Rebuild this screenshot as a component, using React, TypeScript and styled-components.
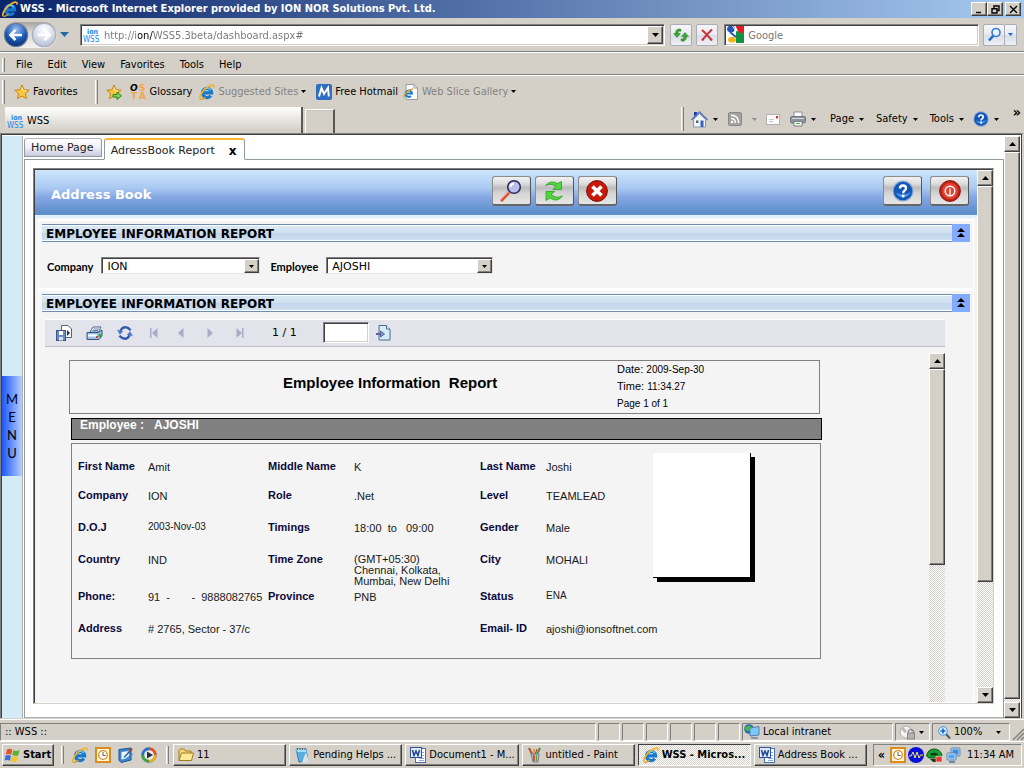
import React from "react";
import styled, { createGlobalStyle, css } from "styled-components";

const face = "#d4d0c8";
const ui = `"DejaVu Sans Condensed", "DejaVu Sans", sans-serif`;
const verdana = `"DejaVu Sans", sans-serif`;
const arial = `"Liberation Sans", sans-serif`;

const Global = createGlobalStyle`
  * { box-sizing: border-box; }
  body { margin: 0; background: ${face}; font: 11px/14px ${ui}; color: #000; }
  button, input, select { font: inherit; color: inherit; margin: 0; padding: 0; border: 0; border-radius: 0; background: none; outline: 0; }
  svg { display: block; flex: none; }
  h1, h2, dl, dd, dt, p { margin: 0; }
`;

const raised = css`
  background: ${face};
  border: 1px solid;
  border-color: #fff #404040 #404040 #fff;
  box-shadow: inset -1px -1px 0 #808080;
`;
const sunken = css`
  border: 1px solid;
  border-color: #808080 #fff #fff #808080;
`;
const checker = css`
  background: repeating-conic-gradient(#fff 0 25%, ${face} 0 50%) 0 0 / 2px 2px;
`;

const Screen = styled.div`
  min-height: 100vh;
  display: flex;
  flex-direction: column;
`;

/* Window chrome */
const TitleBar = styled.header`
  height: 18px;
  display: flex;
  align-items: center;
  gap: 2px;
  padding: 0 3px 0 2px;
  background: linear-gradient(90deg, #0a246a, #a6caf0);
`;
const Title = styled.h1`
  flex: 1;
  font: bold 11px/16px ${ui};
  color: #fff;
  white-space: nowrap;
`;
const WinButton = styled.button<{ $apart?: boolean }>`
  ${raised}
  width: 16px;
  height: 14px;
  margin-left: ${(p) => (p.$apart ? "0" : "-2px")};
  display: flex;
  align-items: center;
  justify-content: center;
`;
const Band = styled.div<{ $h: number }>`
  height: ${(p) => p.$h}px;
  display: flex;
  align-items: center;
  border-bottom: 1px solid #808080;
  box-shadow: 0 1px 0 #fff;
`;
const AddressBand = styled(Band)`
  padding: 0 7px 0 3px;
`;
const NavPill = styled.div`
  display: flex;
  gap: 2px;
  margin-right: 3px;
  border-radius: 13px;
  background: linear-gradient(#a8a49c, #dcdad6 40%, #f4f2f0);
`;
const PlainButton = styled.button`
  display: flex;
  align-items: center;
  white-space: nowrap;
`;
const Field = styled.div<{ $grow: number; $ml: number }>`
  flex: ${(p) => p.$grow} 1 0;
  margin-left: ${(p) => p.$ml}px;
  height: 22px;
  display: flex;
  align-items: center;
  gap: 4px;
  padding: 0 1px 0 2px;
  background: #fff;
  border: 1px solid;
  border-color: #808080 #fff #fff #808080;
  box-shadow: inset 1px 1px 0 #404040, inset -1px -1px 0 ${face};
`;
const UrlInput = styled.input`
  flex: 1;
  min-width: 0;
  padding-top: 2px;
  background: linear-gradient(90deg, #777 34px, #000 34px, #000 49px, #777 49px);
  -webkit-background-clip: text;
  -webkit-text-fill-color: transparent;
`;
const SearchInput = styled.input`
  flex: 1;
  min-width: 0;
  padding-top: 2px;
  color: #777;
`;
const ArrowBox = styled.button<{ $w: number; $h: number }>`
  ${raised}
  width: ${(p) => p.$w}px;
  height: ${(p) => p.$h}px;
  display: flex;
  align-items: center;
  justify-content: center;
  flex: none;
`;
const GlassButton = styled.button<{ $w: number; $ml: number }>`
  width: ${(p) => p.$w}px;
  height: 22px;
  margin-left: ${(p) => p.$ml}px;
  display: flex;
  align-items: center;
  justify-content: center;
  border: 1px solid #a9adb8;
  border-radius: 2px;
  background: linear-gradient(#f6f6f8, #e9ebf0 50%, #dadde6 51%, #eef0f5);
`;
const MenuBand = styled(Band)`
  gap: 11px;
  padding: 3px 0 0 2px;
`;
const MenuList = styled.nav`
  display: flex;
  gap: 15px;
`;
const Grip = styled.span<{ $h: number; $ml?: number }>`
  width: 3px;
  height: ${(p) => p.$h}px;
  margin-left: ${(p) => p.$ml ?? 0}px;
  border-left: 1px solid #fff;
  border-right: 1px solid #808080;
  flex: none;
`;
const MenuItem = styled.button`
  white-space: nowrap;
`;
const FavBand = styled.div`
  height: 31px;
  display: flex;
  align-items: center;
  padding: 2px 2px 0;
`;
const FavLink = styled.button<{ $ml: number; $muted?: boolean }>`
  display: flex;
  align-items: center;
  gap: 3px;
  margin-left: ${(p) => p.$ml}px;
  color: ${(p) => (p.$muted ? "#848280" : "#000")};
  white-space: nowrap;
`;
const TabBand = styled.div`
  height: 27px;
  display: flex;
  align-items: flex-end;
  padding-left: 5px;
`;
const BrowserTab = styled.button`
  width: 298px;
  height: 26px;
  display: flex;
  align-items: center;
  gap: 3px;
  padding: 2px 2px 0;
  border-right: 2px solid #5a5855;
  background: linear-gradient(#fff, ${face} 90%);
`;
const NewTab = styled.button`
  width: 30px;
  height: 24px;
  margin-left: 2px;
  border: 1px solid #fff;
  border-width: 1px 2px 0 1px;
  border-right-color: #5a5855;
  box-shadow: inset 0 1px 0 #c8c4bc;
`;
const CommandBar = styled.div`
  flex: 1;
  height: 28px;
  display: flex;
  align-items: center;
  justify-content: flex-end;
  padding-right: 3px;
`;
const Command = styled.button<{ $ml: number }>`
  display: flex;
  align-items: center;
  gap: 5px;
  margin-left: ${(p) => p.$ml}px;
`;
const Chevron = styled.button`
  margin: -14px 0 0 14px;
  font: bold 14px/14px ${ui};
`;

/* Page area */
const Viewport = styled.main`
  flex: 1;
  display: flex;
  background: #fff;
  border: 1px solid #808080;
  border-width: 1px 2px 1px 1px;
  border-color: #808080 ${face} ${face} #808080;
  box-shadow: inset 1px 1px 0 #404040, inset -1px 0 0 #404040;
  padding: 2px 2px 0 1px;
`;
const SideRail = styled.aside`
  width: 21px;
  display: flex;
  flex-direction: column;
  background: #d2ebf7;
  border-right: 1px solid #b0b0b0;
  padding-top: 240px;
`;
const SideMenu = styled.button`
  width: 20px;
  height: 100px;
  display: flex;
  flex-direction: column;
  align-items: center;
  justify-content: center;
  background: linear-gradient(90deg, #1c58f8, #b4ceff);
  font: 13px/18px Lato, sans-serif;
`;
const Workspace = styled.div`
  flex: 1;
  min-width: 0;
  display: flex;
  flex-direction: column;
  margin: 2px 0 0 1px;
`;
const PageTabs = styled.nav`
  height: 21px;
  display: flex;
  align-items: flex-end;
  gap: 2px;
`;
const PageTab = styled.button<{ $on?: boolean }>`
  height: ${(p) => (p.$on ? 22 : 19)}px;
  margin-bottom: ${(p) => (p.$on ? -1 : 2)}px;
  padding: ${(p) => (p.$on ? "3px 7px 0 6px" : "0 7px 0 6px")};
  border: 1px solid #919b9c;
  border-top: ${(p) => (p.$on ? "2px solid #ffb62d" : "1px solid #b4b4bc")};
  border-bottom-color: ${(p) => (p.$on ? "#fff" : "#919b9c")};
  border-radius: 3px 3px 0 0;
  background: ${(p) => (p.$on ? "#fff" : "linear-gradient(#fff, #f0f0f8 50%, #c8c8e0)")};
  font: 11px/14px ${verdana};
  color: #222;
  display: flex;
  align-items: center;
  gap: 14px;
  white-space: nowrap;
  z-index: 1;
`;
const CloseMark = styled.b`
  font: bold 12px/14px ${verdana};
  color: #000;
`;
const TabPanel = styled.section`
  flex: 1;
  display: flex;
  border: 1px solid #919b9c;
  border-bottom: 1px solid #b0b0b0;
  padding: 8px 9px 13px 8px;
`;
const Frame = styled.div`
  flex: 1;
  min-width: 0;
  display: flex;
  border: 1px solid;
  border-color: #808080 ${face} ${face} #808080;
  box-shadow: inset 1px 1px 0 #404040;
  padding: 1px 0 0 1px;
`;
const FrameBody = styled.div`
  flex: 1;
  min-width: 0;
  display: flex;
  flex-direction: column;
  background: #f4f4f4;
`;
const AppHeader = styled.div`
  height: 48px;
  display: flex;
  align-items: center;
  padding: 0 8px 3px 16px;
  background: linear-gradient(#cfe6fc, #a9c9f2 40%, #86a8e4 60%, #6090cc 92%);
  border-bottom: 3px solid #e0effc;
`;
const AppTitle = styled.h2`
  flex: 12;
  font: bold 13px/16px ${verdana};
  color: #fff;
  padding-top: 8px;
`;
const HeaderTools = styled.div`
  flex: 13;
  display: flex;
  gap: 4px;
`;
const EndTools = styled.div`
  display: flex;
  gap: 8px;
`;
const MetalButton = styled.button`
  width: 39px;
  height: 30px;
  display: flex;
  align-items: center;
  justify-content: center;
  border: 1px solid #8c8c8c;
  border-right-color: #555;
  border-bottom: 2px solid #666;
  border-radius: 3px;
  background: linear-gradient(#f2f2f2, #dcdcdc 25%, #bcbcbc 40%, #d4d4d4 60%, #e6e6e6);
`;
const Section = styled.section<{ $grow?: boolean }>`
  flex: ${(p) => (p.$grow ? "1" : "none")};
  display: flex;
  flex-direction: column;
  margin: ${(p) => (p.$grow ? "0 3px 0" : "1px 3px 0")};
  border: 1px solid #fff;
  border-top: 2px solid #fff;
  padding: 3px 3px 0;
`;
const SectionBar = styled.div`
  height: 18px;
  display: flex;
`;
const SectionTitle = styled.h2`
  flex: 1;
  padding-left: 4px;
  border: 1px solid #6a8db0;
  border-width: 1px 0;
  box-shadow: inset 0 1px 0 #fff, inset 0 -1px 0 #fff;
  background: linear-gradient(#dce8f4, #d0e0f0 50%, #c2d5ec 51%, #d0e0f0);
  font: bold 12px/18px ${verdana};
`;
const Collapse = styled.button`
  width: 18px;
  background: #82aaff;
  display: flex;
  align-items: center;
  justify-content: center;
`;
const Filters = styled.div`
  display: flex;
  align-items: center;
  height: 46px;
  padding: 1px 0 0 5px;
`;
const FilterLabel = styled.label`
  font: bold 11px/14px Lato, sans-serif;
  margin-right: 8px;
  padding-top: 3px;
`;
const Picker = styled.div`
  width: 159px;
  height: 17px;
  display: flex;
  margin-right: 10px;
  background: #fff;
  border: 1px solid;
  border-color: #808080 #e8e6e0 #e8e6e0 #808080;
  box-shadow: inset 1px 1px 0 #404040;
  padding: 1px 0 0 1px;
`;
const WidePicker = styled(Picker)`
  width: 167px;
`;
const PickerSelect = styled.select`
  appearance: none;
  flex: 1;
  min-width: 0;
  padding: 1px 0 0 4px;
  font: 11px/14px ${verdana};
`;
const ReportBar = styled.div`
  height: 28px;
  margin: 7px 25px 0 3px;
  display: flex;
  align-items: center;
  padding: 0 0 1px 11px;
  background: #e3e3ec;
  border-bottom: 1px solid #bcbcd0;
  border-top: 1px solid #fff;
`;
const Tool = styled.button<{ $w: number }>`
  width: ${(p) => p.$w}px;
  display: flex;
`;
const PageNo = styled.span`
  width: 51px;
  font: 11px/14px ${verdana};
`;
const PageInput = styled.input`
  width: 46px;
  height: 21px;
  margin-right: 7px;
  background: #fff;
  border: 1px solid;
  border-color: #808080 #fff #fff #808080;
  box-shadow: inset 1px 1px 0 #404040, inset -1px -1px 0 ${face};
`;
const ReportView = styled.div`
  flex: 1;
  display: flex;
  margin: 6px 25px 0 3px;
`;
const Paper = styled.div`
  flex: 1;
  min-width: 0;
  padding: 7px 0 16px 24px;
  font: 11px/14px ${arial};
`;
const ReportHead = styled.div`
  width: 751px;
  height: 54px;
  display: flex;
  border: 1px solid #808080;
`;
const ReportTitle = styled.h2`
  width: 547px;
  padding: 13px 0 0 213px;
  font: bold 15px/18px ${arial};
  white-space: pre;
`;
const Stamp = styled.div`
  line-height: 17px;
`;
const Small = styled.span`
  font-size: 10px;
`;
const PersonBar = styled.div`
  width: 751px;
  height: 22px;
  margin: 4px 0 3px 2px;
  display: flex;
  gap: 10px;
  padding-left: 8px;
  border: 1px solid #000;
  background: #808080;
  color: #fff;
  font: bold 12px/13px ${arial};
`;
const Card = styled.div`
  width: 750px;
  height: 216px;
  margin-left: 2px;
  display: flex;
  border: 1px solid #808080;
  padding: 9px 0 0 6px;
`;
const Details = styled.dl`
  width: 575px;
  display: grid;
  grid-template-columns: 70px 120px 86px 126px 66px 1fr;
  grid-template-rows: 29px 32px 32px 37px 32px 20px;
  padding-top: 6px;
  white-space: pre;
`;
const Label = styled.dt<{ $col: number; $row: number }>`
  grid-area: ${(p) => p.$row} / ${(p) => p.$col};
  font-weight: bold;
  color: #0a0a3c;
`;
const Value = styled.dd<{ $col: number; $row: number; $size?: number; $lines?: boolean }>`
  grid-area: ${(p) => p.$row} / ${(p) => p.$col};
  font-size: ${(p) => p.$size ?? 11}px;
  line-height: ${(p) => (p.$lines ? 11 : p.$size ? 14 : 16)}px;
  padding-top: ${(p) => (p.$lines ? "2px" : "0")};
  color: #181818;
`;
const Photo = styled.div`
  width: 98px;
  height: 125px;
  background: #fff;
  border: solid #000;
  border-width: 0 1px 1px 0;
  box-shadow: 4px 4px 0 #000;
`;

/* Scroll bars */
const Track = styled.div`
  width: 16px;
  flex: none;
  display: flex;
  flex-direction: column;
  ${checker}
`;
const Thumb = styled.div<{ $share: string }>`
  ${raised}
  flex: 0 1 ${(p) => p.$share};
  min-height: 16px;
`;
const Spacer = styled.div`
  flex: 1;
`;

/* Status bar and task bar */
const StatusBar = styled.div`
  height: 22px;
  display: flex;
  gap: 2px;
  padding: 3px 0 0;
  border-top: 1px solid #fff;
`;
const Pane = styled.div<{ $w?: number; $pad?: number }>`
  ${sunken}
  flex: ${(p) => (p.$w ? `0 0 ${p.$w}px` : "1")};
  min-width: 0;
  display: flex;
  align-items: center;
  gap: 3px;
  padding-left: ${(p) => p.$pad ?? 0}px;
  white-space: nowrap;
`;
const ZoomPane = styled(Pane)`
  padding-right: 8px;
`;
const TaskBar = styled.footer`
  height: 27px;
  display: flex;
  align-items: center;
  padding: 0 2px;
  border-top: 1px solid #fff;
`;
const StartButton = styled.button`
  ${raised}
  width: 52px;
  height: 22px;
  display: flex;
  align-items: center;
  gap: 2px;
  padding-left: 1px;
  font-weight: bold;
`;
const QuickLaunch = styled.div`
  display: flex;
  gap: 7px;
  margin: 0 9px 0 8px;
`;
const Tasks = styled.div`
  flex: 1;
  min-width: 0;
  display: flex;
  gap: 3px;
  margin: 0 6px 0 4px;
`;
const Task = styled.button<{ $on?: boolean }>`
  ${(p) =>
    p.$on
      ? css`
          ${checker}
          border: 1px solid;
          border-color: #404040 #fff #fff #404040;
          font-weight: bold;
        `
      : raised}
  flex: 1;
  min-width: 0;
  height: 22px;
  display: flex;
  align-items: center;
  gap: 3px;
  padding-left: 4px;
  white-space: nowrap;
`;
const Tray = styled.div`
  ${sunken}
  width: 149px;
  height: 22px;
  display: flex;
  align-items: center;
  gap: 2px;
  padding: 0 7px 0 4px;
`;
const TrayMore = styled.button`
  font: bold 12px/14px ${ui};
  margin-right: 3px;
`;
const Clock = styled.time`
  margin-left: auto;
  white-space: nowrap;
`;

/* Drawings */
type S = { s?: number };
const Tri = ({ up, c = "#000", w = 5 }: { up?: boolean; c?: string; w?: number }) => (
  <svg width={w} height={(w + 1) / 2} viewBox="0 0 10 6" preserveAspectRatio="none">
    <path d={up ? "M0 6L5 0L10 6Z" : "M0 0L5 6L10 0Z"} fill={c} />
  </svg>
);
const IE = ({ s = 16 }: S) => (
  <svg width={s} height={s} viewBox="0 0 16 16">
    <path d="M3.800 8.800H12.600A4.600 4.600 0 1 0 11.800 11.600" fill="none" stroke="#1479cf" strokeWidth="3.200" />
    <path d="M4.500 6.200A4.600 4.600 0 0 1 12 6" fill="none" stroke="#6cc4f5" strokeWidth="1.300" />
    <path d="M1.200 15C-.5 12 5 4.600 10.500 2C13.500.6 15.600.8 15 3.700" fill="none" stroke="#f5b32a" strokeWidth="1.700" />
    <path d="M1.200 15C2.500 15.800 5 14.500 6.500 13" fill="none" stroke="#e09a18" strokeWidth="1.300" />
  </svg>
);
const Wss = () => (
  <svg width="17" height="16" viewBox="0 0 17 16" fill="#1488f0" fontFamily="DejaVu Sans Condensed">
    <text x="4" y="7" fontSize="7" fontWeight="bold">ion</text>
    <text x="0" y="15" fontSize="8">WSS</text>
  </svg>
);
const Nav = ({ next }: { next?: boolean }) => (
  <svg width="26" height="26" viewBox="0 0 26 26">
    <defs>
      <radialGradient id={next ? "nf" : "nb"} cx=".5" cy=".25" r=".75">
        <stop offset="0" stopColor={next ? "#fff" : "#9cc0ee"} />
        <stop offset=".6" stopColor={next ? "#d8dde8" : "#1f5cba"} />
        <stop offset="1" stopColor={next ? "#b8c2d6" : "#0b3278"} />
      </radialGradient>
    </defs>
    <circle cx="13" cy="13" r="12.300" fill={next ? "#a8b0c0" : "#707c94"} />
    <circle cx="13" cy="13" r="11" fill={next ? "url(#nf)" : "url(#nb)"} />
    <path d={next ? "M7 13H18M13.500 8L18.500 13L13.500 18" : "M19 13H8M12.500 8L7.500 13L12.500 18"} fill="none" stroke="#fff" strokeWidth="2.600" />
  </svg>
);
const Star = ({ add }: { add?: boolean }) => (
  <svg width="16" height="16" viewBox="0 0 16 16">
    <path d="M8 1L10.100 5.700L15.200 6.200L11.400 9.600L12.500 14.700L8 12.100L3.500 14.700L4.600 9.600L.8 6.200L5.900 5.700Z" fill="#fbc63e" stroke="#c88412" />
    <path d="M8 3.500L9.200 6.800L12 7" fill="none" stroke="#fff3b8" />
    {add && <path d="M7 10.500H11V8L15.500 11.700L11 15.500V13H7Z" fill="#7cd25c" stroke="#2c8a1a" />}
  </svg>
);
const Osta = () => (
  <svg width="17" height="17" viewBox="0 0 17 17" fontFamily="DejaVu Sans" fontWeight="bold" fontSize="9">
    <text x="0" y="8" fontStyle="italic">O</text>
    <text x="9" y="8" fill="#f4a540">S</text>
    <text x="1" y="16" fill="#f4a540">T</text>
    <text x="9" y="16" fill="#f4a540">A</text>
  </svg>
);
const Hotmail = () => (
  <svg width="16" height="16" viewBox="0 0 16 16">
    <rect width="16" height="16" rx="2" fill="#2f6fc0" />
    <path d="M3 12.500L5.500 4L8 10L12 4L12.800 12.500" fill="none" stroke="#fff" strokeWidth="2" />
  </svg>
);
const Slice = () => (
  <svg width="16" height="16" viewBox="0 0 16 16">
    <path d="M3 .5H11L14.500 4V15.500H3Z" fill="#fafafc" stroke="#9a9aa8" />
    <path d="M11 .5V4H14.500" fill="none" stroke="#9a9aa8" />
    <path d="M3 9.500H9A3.200 3.200 0 1 0 8 12" fill="none" stroke="#1479cf" strokeWidth="2" />
    <path d="M.8 13.500C0 11 6 5 10 5" fill="none" stroke="#f0a020" strokeWidth="1.400" />
  </svg>
);
const RefreshArrows = () => (
  <svg width="16" height="16" viewBox="0 0 16 16" fill="#3ba535" stroke="#1f7a1c" strokeWidth=".5">
    <path d="M8 2.500C4.500 1 2.300 3.500 2.600 6.500H.5L4 10.500L7.500 6.500H5.200C5 4.500 6 3.800 8 4.200Z" />
    <path d="M8 13.800C11.500 15.300 13.700 12.500 13.400 9.500H15.500L12 5.500L8.500 9.500H10.800C11 11.500 10 12.300 8 11.900Z" />
  </svg>
);
const RedX = () => (
  <svg width="14" height="14" viewBox="0 0 14 14">
    <path d="M2 2C5 4.500 9 9 12 12.500M12 1.500C8.500 4.500 5 9 2 12.500" fill="none" stroke="#c8373c" strokeWidth="2.200" />
  </svg>
);
const GoogleMark = () => (
  <svg width="17" height="17" viewBox="0 0 17 17">
    <rect width="17" height="17" fill="#fff" />
    <path d="M8.500 0H17V7H12Z" fill="#e61c1c" />
    <path d="M9 6Q10 3.500 12 6Q14 8 17 6.500V17H9Z" fill="#15923f" />
    <ellipse cx="4" cy="3" rx="4" ry="3.300" fill="#2257b8" />
    <ellipse cx="5" cy="13.700" rx="4" ry="2.900" fill="#f6b51d" />
    <path d="M3 6L9 11" stroke="#2257b8" strokeWidth="2" />
    <path d="M5.500 .5Q9 3 8 9" fill="none" stroke="#fff" />
  </svg>
);
const Lens = () => (
  <svg width="15" height="15" viewBox="0 0 15 15" fill="none">
    <path d="M2 13.500L6.500 8.500" stroke="#2469c8" strokeWidth="2.600" />
    <circle cx="9" cy="5.500" r="4" fill="#e8f3ff" stroke="#3a7ed8" strokeWidth="1.700" />
  </svg>
);
const Home = () => (
  <svg width="17" height="17" viewBox="0 0 17 17">
    <rect x="3" y="1" width="3" height="5" fill="#2038b8" />
    <path d="M2.500 8.500L8.500 2.500L14.500 8.500V16H2.500Z" fill="#f2f5fb" stroke="#8894b0" />
    <path d="M.5 9L8.500 1.200L16.500 9" fill="none" stroke="#5e7db6" strokeWidth="1.600" />
    <path d="M5 9.500H7.500V12H5Z" fill="#5a6478" />
    <path d="M9.500 9.500H12.500V16H9.500Z" fill="#3560c0" />
  </svg>
);
const Feed = () => (
  <svg width="14" height="14" viewBox="0 0 14 14">
    <rect x=".5" y=".5" width="13" height="13" rx="1.500" fill="#a4a2a0" stroke="#8c8a88" />
    <circle cx="4" cy="10" r="1.300" fill="#fff" />
    <path d="M3 6.500Q7.500 6.500 7.500 11M3 3.300Q10.700 3.500 10.700 11" fill="none" stroke="#fff" strokeWidth="1.400" />
  </svg>
);
const Mail = () => (
  <svg width="14" height="11" viewBox="0 0 14 11">
    <rect x=".5" y=".5" width="13" height="10" fill="#fcfcfc" stroke="#b4b0b8" />
    <rect x="10" y="2" width="2" height="2.500" fill="#e03030" />
    <path d="M3 5.500H8M3 7.500H7" stroke="#c8c8d4" />
  </svg>
);
const Printer = () => (
  <svg width="16" height="16" viewBox="0 0 16 16">
    <path d="M4 6V1H12V6" fill="#fff" stroke="#8a8f96" />
    <rect x=".5" y="5.500" width="15" height="6.500" rx="1.500" fill="#8e959e" stroke="#6f767e" />
    <path d="M2 7.500H14" stroke="#cfd5da" />
    <path d="M4 10.500H12V15H4Z" fill="#f4faf4" stroke="#7a8188" />
    <rect x="6" y="12" width="4" height="1" fill="#4fae50" />
  </svg>
);
const HelpDot = ({ s = 16 }: S) => (
  <svg width={s} height={s} viewBox="0 0 22 22">
    <circle cx="11" cy="11" r="10.500" fill="#8aa6d4" />
    <circle cx="11" cy="11" r="9.300" fill="#1357b8" />
    <path d="M4 13A8 8 0 0 0 18.500 12Q14 16 4 13Z" fill="#4b96e8" />
    <path d="M8 8.500Q8 5.500 11 5.500T14 8.300Q14 10 12.200 11Q11.200 11.700 11.200 13.200" fill="none" stroke="#fff" strokeWidth="2.300" />
    <circle cx="11.200" cy="16" r="1.500" fill="#fff" />
  </svg>
);
const Magnify = () => (
  <svg width="24" height="24" viewBox="0 0 24 24">
    <path d="M2 22L10 13.500" stroke="#e05030" strokeWidth="3" />
    <path d="M1.500 21L9 13" stroke="#f6b09c" />
    <circle cx="15" cy="8" r="6.300" fill="#bcbfe8" stroke="#2c2c60" strokeWidth="1.600" />
    <path d="M11.500 8A4 4 0 0 1 15 4.500" fill="none" stroke="#fff" strokeWidth="2" />
  </svg>
);
const Reload = () => (
  <svg width="22" height="22" viewBox="0 0 22 22" fill="#4fd83c" stroke="#2c9c22" strokeWidth=".8">
    <path d="M2.500 5.500Q8 -.5 14.500 3.500L18.500 1.500V9.500H10L13 6.300Q8 2.800 2.500 5.500Z" />
    <path d="M19.500 16Q14 23 7 18L3 20.500V11.500H11.500L8 14.500Q13 19 19.500 16Z" />
  </svg>
);
const CloseDot = () => (
  <svg width="22" height="22" viewBox="0 0 22 22">
    <circle cx="11" cy="11" r="10.400" fill="#c81808" stroke="#7a0c04" />
    <path d="M6.500 6.500L15.500 15.500M15.500 6.500L6.500 15.500" stroke="#fff" strokeWidth="3.800" />
  </svg>
);
const Power = () => (
  <svg width="22" height="22" viewBox="0 0 22 22">
    <circle cx="11" cy="11" r="10.400" fill="#c02418" stroke="#8e140c" />
    <circle cx="11" cy="11" r="8" fill="#e04434" />
    <circle cx="11" cy="11" r="4.800" fill="none" stroke="#fff" strokeWidth="1.400" />
    <path d="M11 8.500V15.500" stroke="#fff" strokeWidth="1.300" />
  </svg>
);
const Export = () => (
  <svg width="16" height="16" viewBox="0 0 16 16">
    <path d="M5.500.5H12L15.500 4V12.500H5.500Z" fill="#fff" stroke="#4a6478" />
    <path d="M11 5L14 8L11 11Z" fill="#1c2c4c" />
    <rect x=".5" y="5.500" width="9" height="10" fill="#6a8cc4" stroke="#3c5488" />
    <rect x="3" y="6" width="4" height="4" fill="#fff" />
    <rect x="3" y="12" width="4" height="3.500" fill="#dce4f0" />
  </svg>
);
const PrintColor = () => (
  <svg width="17" height="16" viewBox="0 0 17 16">
    <path d="M4 7L7 2H15L12.500 7Z" fill="#fff" stroke="#46628c" />
    <path d="M7.500 4H13M6.500 5.500H12" stroke="#5a7cb0" />
    <path d="M1 7.500H12.500L16 5V11L13 14.500H1Z" fill="#9cc0e8" stroke="#34547c" />
    <rect x="2" y="9.500" width="9" height="2" fill="#fff" />
    <rect x="10" y="11" width="2" height="2" fill="#e84030" />
    <rect x="12.500" y="9" width="3" height="3" fill="#38a838" />
  </svg>
);
const Sync = () => (
  <svg width="16" height="14" viewBox="0 0 17 15" fill="none" stroke="#2f5caa" strokeWidth="2.600">
    <path d="M14.500 4.500Q10 -.5 5.500 2.500L3.500 5" />
    <path d="M2.500 10.500Q7 15.500 11.500 12.500L13.500 10" />
    <path d="M0 4L6.500 5.500L3 9.500Z" fill="#4a78c4" stroke="none" />
    <path d="M17 11L10.500 9.500L14 5.500Z" fill="#4a78c4" stroke="none" />
  </svg>
);
const Step = ({ back, end }: { back?: boolean; end?: boolean }) => (
  <svg width="9" height="10" viewBox="0 0 9 10" fill="#a9acc6">
    <path d={back ? "M7.500 0V10L2 5Z" : "M1.500 0V10L7 5Z"} />
    {end && <rect x={back ? 0 : 7} width="1.500" height="10" />}
  </svg>
);
const GoPage = () => (
  <svg width="16" height="16" viewBox="0 0 16 16">
    <path d="M3 .5H10.500L14 4V15H3Z" fill="#d4ecfa" stroke="#4a6c88" />
    <path d="M10.500 .5V4H14" fill="#fff" stroke="#4a6c88" />
    <path d="M0 9H5" stroke="#5a6498" strokeWidth="2" />
    <path d="M4.500 6L8.500 9L4.500 12Z" fill="#8c96c8" stroke="#54609c" />
  </svg>
);
const Flag = () => (
  <svg width="17" height="16" viewBox="0 0 17 16">
    <path d="M3 2.500Q6 1 8.300 2.800L7.300 7.800Q5 6.200 1.800 7.500Z" fill="#e8502c" />
    <path d="M9.300 3.200Q12 4.800 15.500 3.200L14.300 8.200Q11 9.500 8.300 8Z" fill="#5cb030" />
    <path d="M1.600 8.600Q4.800 7.200 7 8.900L6 13.800Q3.500 12.200 .5 13.500Z" fill="#3a70dc" />
    <path d="M8 9.200Q11 10.700 14.100 9.300L12.900 14.300Q9.500 15.700 7 14.300Z" fill="#f8c424" />
  </svg>
);
const OutlookClock = () => (
  <svg width="16" height="16" viewBox="0 0 16 16">
    <rect x="1" y="1" width="14" height="14" fill="#fff4dc" stroke="#dc8c1c" strokeWidth="2" />
    <circle cx="8" cy="8" r="4.300" fill="#fff" stroke="#d09030" strokeWidth="1.300" />
    <path d="M8 5V8.500H10.500" fill="none" stroke="#7a5a20" />
  </svg>
);
const Desktop = () => (
  <svg width="16" height="16" viewBox="0 0 16 16">
    <path d="M1 2.500L13 1V13L3 15.500L1 13Z" fill="#3d84d0" stroke="#1d5490" />
    <path d="M3.500 5L11 4V11L3.500 12.500Z" fill="#eef6fc" />
    <path d="M6 10.500L12 4" stroke="#2a68b0" strokeWidth="1.600" />
    <path d="M11.500 4.500L14 1.500" stroke="#a04828" strokeWidth="2" />
    <path d="M8 12L14.500 7" stroke="#3d84d0" strokeWidth="1.500" />
  </svg>
);
const Media = () => (
  <svg width="16" height="16" viewBox="0 0 16 16">
    <circle cx="8" cy="8" r="7.500" fill="#e8ecf0" stroke="#8494a0" />
    <path d="M8 1.800A6.200 6.200 0 0 0 1.800 8" fill="none" stroke="#2c6cd0" strokeWidth="2.700" />
    <path d="M8 1.800A6.200 6.200 0 0 1 14.200 8" fill="none" stroke="#e8501c" strokeWidth="2.700" />
    <path d="M14.200 8A6.200 6.200 0 0 1 8 14.200" fill="none" stroke="#e8b01c" strokeWidth="2.700" />
    <path d="M8 14.200A6.200 6.200 0 0 1 1.800 8" fill="none" stroke="#3ca03c" strokeWidth="2.700" />
    <path d="M6 4.500L12 8L6 11.500Z" fill="#283038" />
  </svg>
);
const Folder = () => (
  <svg width="16" height="16" viewBox="0 0 16 16">
    <path d="M1 13.500V3.500L2.500 2H6L7.500 4H13V6" fill="#f6d674" stroke="#a07c1c" />
    <path d="M1 13.500L3.500 6H15.500L13.500 13.500Z" fill="#fce898" stroke="#a07c1c" />
  </svg>
);
const Notes = () => (
  <svg width="16" height="16" viewBox="0 0 16 16">
    <path d="M2 2H12L14 14L5 15Z" fill="#58aee0" stroke="#3480b0" />
    <path d="M2 2H12L12.500 5H3Z" fill="#a8dcf6" />
    <path d="M3.500 1V3M6 1V3M8.500 1V3M11 1V3" stroke="#50646c" />
    <path d="M12 5L15 15L8 15.500Z" fill="#d8e4e8" />
  </svg>
);
const Word = () => (
  <svg width="16" height="16" viewBox="0 0 16 16">
    <rect x="5.500" y="1.500" width="10" height="14" fill="#fff" stroke="#4870b0" />
    <path d="M9 11.500H14M9 13.500H14M12 5.500H14M12 8.500H14" stroke="#8aa8d8" />
    <rect x=".5" y=".5" width="11" height="10" fill="#e4ecfa" stroke="#2c54a0" />
    <path d="M2.500 3L4 8.500L6 4L8 8.500L9.500 3" fill="none" stroke="#1c4494" strokeWidth="1.500" />
  </svg>
);
const Paint = () => (
  <svg width="16" height="16" viewBox="0 0 16 16">
    <path d="M2 1L6 9" stroke="#b0522c" strokeWidth="2" />
    <path d="M7 2V9" stroke="#e0a030" strokeWidth="2" />
    <path d="M13 1L9 9" stroke="#4c8a48" strokeWidth="2" />
    <path d="M10 2L8 8" stroke="#c83030" />
    <path d="M4 7H12L11 15H6Z" fill="#b8c4cc" stroke="#74808c" />
    <path d="M7 8V14" stroke="#d85030" strokeWidth="2" />
    <path d="M9.500 8V14" stroke="#58a048" />
  </svg>
);
const Monitors = ({ globe }: { globe?: boolean }) => (
  <svg width="16" height="16" viewBox="0 0 16 16">
    {globe ? (
      <>
        <circle cx="5" cy="5" r="4.800" fill="#2468b8" />
        <path d="M1 4Q4 0 8 3L6 7Q2 8 1 4Z" fill="#48b848" />
        <path d="M6 4L15 2.500V11L6 12Z" fill="#7cc8fc" stroke="#5a7ca0" />
        <path d="M7 14H14" stroke="#8898a8" strokeWidth="2" />
      </>
    ) : (
      <>
        <rect x="6" y="1" width="9" height="8" rx="1" fill="#b8d4f0" stroke="#5a84b4" />
        <rect x="7.500" y="2.500" width="6" height="5" fill="#3c8ce0" />
        <rect x="2" y="6" width="9" height="7" rx="1" fill="#c8dcf0" stroke="#5a84b4" />
        <rect x="3.500" y="7.500" width="6" height="4" fill="#4ca4f0" />
        <path d="M4 15H10" stroke="#6c8cac" strokeWidth="2" />
      </>
    )}
  </svg>
);
const Wave = () => (
  <svg width="16" height="16" viewBox="0 0 16 16">
    <circle cx="8" cy="8" r="8" fill="#0c10dc" />
    <path d="M1 9H3L5 5L7 11L9 5L11 11L12.500 8H15" fill="none" stroke="#f0e850" />
  </svg>
);
const Phone = () => (
  <svg width="17" height="16" viewBox="0 0 17 16">
    <path d="M.5 9Q2 2 8 2Q14 2 16 8L14 11H3Z" fill="#18a030" stroke="#0c5418" />
    <path d="M4 7Q8 4.500 12 7L11 8.500H5Z" fill="#103c18" />
    <path d="M4 12H10V15H7Z" fill="#103c18" />
    <path d="M10 9.500H16V15H10Z" fill="#e83434" stroke="#fff" strokeWidth=".5" />
  </svg>
);
const Lock = () => (
  <svg width="17" height="16" viewBox="0 0 17 16">
    <circle cx="7" cy="8" r="6" fill="#f4f4f4" stroke="#aaa" />
    <path d="M7 8L3 4" stroke="#b8b8b8" strokeWidth="3" />
    <path d="M9.500 9V7Q12 4 14.500 7V9" fill="none" stroke="#8c8c8c" strokeWidth="1.400" />
    <rect x="8.500" y="9" width="7" height="6" fill="#b4b2b0" stroke="#8a8886" />
  </svg>
);
const ZoomPlus = () => (
  <svg width="13" height="13" viewBox="0 0 13 13">
    <path d="M8 8L12 12.500" stroke="#4c5c70" strokeWidth="2" />
    <circle cx="5" cy="5" r="4.300" fill="#d4ecff" stroke="#4c94e0" />
    <path d="M5 2.500V7.500M2.500 5H7.500" stroke="#1464cc" strokeWidth="1.600" />
  </svg>
);
const Grab = () => (
  <svg width="12" height="18" viewBox="0 0 12 18">
    <path d="M1 17L12 6M5 17L12 10M9 17L12 14" stroke="#808080" strokeWidth="1.500" />
  </svg>
);
const DoubleUp = () => (
  <svg width="8" height="10" viewBox="0 0 8 10">
    <path d="M4 0L8 4H0ZM4 5L8 9H0Z" />
  </svg>
);
const WinMark = ({ d }: { d: string }) => (
  <svg width="9" height="9" viewBox="0 0 9 9" fill="none" stroke="#000">
    <path d={d} strokeWidth="1.400" />
  </svg>
);

const ScrollBar = ({ share, open }: { share: string; open?: boolean }) => (
  <Track>
    <ArrowBox $w={16} $h={16} aria-label="Scroll up"><Tri up w={7} /></ArrowBox>
    <Thumb $share={share} />
    <Spacer />
    {!open && <ArrowBox $w={16} $h={16} aria-label="Scroll down"><Tri w={7} /></ArrowBox>}
  </Track>
);

const labels: [string, number, number][] = [
  ["First Name", 1, 1], ["Middle Name", 3, 1], ["Last Name", 5, 1],
  ["Company", 1, 2], ["Role", 3, 2], ["Level", 5, 2],
  ["D.O.J", 1, 3], ["Timings", 3, 3], ["Gender", 5, 3],
  ["Country", 1, 4], ["Time Zone", 3, 4], ["City", 5, 4],
  ["Phone:", 1, 5], ["Province", 3, 5], ["Status", 5, 5],
  ["Address", 1, 6], ["Email- ID", 5, 6],
];
const values: { t: string; c: number; r: number; size?: number; lines?: boolean }[] = [
  { t: "Amit", c: 2, r: 1 }, { t: "K", c: 4, r: 1 }, { t: "Joshi", c: 6, r: 1 },
  { t: "ION", c: 2, r: 2 }, { t: ".Net", c: 4, r: 2 }, { t: "TEAMLEAD", c: 6, r: 2 },
  { t: "2003-Nov-03", c: 2, r: 3, size: 10 }, { t: "18:00  to   09:00", c: 4, r: 3 }, { t: "Male", c: 6, r: 3 },
  { t: "IND", c: 2, r: 4 }, { t: "(GMT+05:30)\nChennai, Kolkata,\nMumbai, New Delhi", c: 4, r: 4, lines: true }, { t: "MOHALI", c: 6, r: 4 },
  { t: "91  -       -  9888082765", c: 2, r: 5 }, { t: "PNB", c: 4, r: 5 }, { t: "ENA", c: 6, r: 5, size: 10 },
  { t: "# 2765, Sector - 37/c", c: 2, r: 6 }, { t: "ajoshi@ionsoftnet.com", c: 6, r: 6 },
];

const SectionHeading = () => (
  <SectionBar>
    <SectionTitle>EMPLOYEE INFORMATION REPORT</SectionTitle>
    <Collapse aria-label="Collapse"><DoubleUp /></Collapse>
  </SectionBar>
);

export default function App() {
  return (
    <Screen>
      <Global />
      <TitleBar>
        <IE />
        <Title>WSS - Microsoft Internet Explorer provided by ION NOR Solutions Pvt. Ltd.</Title>
        <WinButton aria-label="Minimize"><WinMark d="M1 7.500H6" /></WinButton>
        <WinButton aria-label="Restore"><WinMark d="M3 3V1H8V5.500H6M1 3.700H6V8H1Z" /></WinButton>
        <WinButton aria-label="Close" $apart><WinMark d="M1 1L8 8M8 1L1 8" /></WinButton>
      </TitleBar>

      <AddressBand $h={34}>
        <NavPill>
          <PlainButton aria-label="Back"><Nav /></PlainButton>
          <PlainButton aria-label="Forward"><Nav next /></PlainButton>
        </NavPill>
        <PlainButton aria-label="Recent pages"><Tri c="#2468a8" w={9} /></PlainButton>
        <Field $grow={590} $ml={11}>
          <Wss />
          <UrlInput aria-label="Address" defaultValue="http://ion/WSS5.3beta/dashboard.aspx#" />
          <ArrowBox $w={16} $h={18} aria-label="Show addresses"><Tri w={7} /></ArrowBox>
        </Field>
        <GlassButton $w={22} $ml={5} aria-label="Refresh"><RefreshArrows /></GlassButton>
        <GlassButton $w={22} $ml={4} aria-label="Stop"><RedX /></GlassButton>
        <Field $grow={254} $ml={6}>
          <GoogleMark />
          <SearchInput aria-label="Search" defaultValue="Google" />
        </Field>
        <GlassButton $w={22} $ml={4} aria-label="Search"><Lens /></GlassButton>
        <GlassButton $w={13} $ml={-1} aria-label="Search options"><Tri c="#1c64cc" /></GlassButton>
      </AddressBand>

      <MenuBand $h={23}>
        <Grip $h={14} />
        <MenuList>
          {["File", "Edit", "View", "Favorites", "Tools", "Help"].map((m) => <MenuItem key={m}>{m}</MenuItem>)}
        </MenuList>
      </MenuBand>

      <FavBand>
        <Grip $h={24} />
        <FavLink $ml={9}><Star />Favorites</FavLink>
        <Grip $h={24} $ml={17} />
        <FavLink $ml={8} aria-label="Add to favorites"><Star add /></FavLink>
        <FavLink $ml={8}><Osta />Glossary</FavLink>
        <FavLink $ml={7} $muted><IE />Suggested Sites <Tri /></FavLink>
        <FavLink $ml={10}><Hotmail />Free Hotmail</FavLink>
        <FavLink $ml={5} $muted><Slice />Web Slice Gallery <Tri /></FavLink>
      </FavBand>

      <TabBand>
        <BrowserTab><Wss />WSS</BrowserTab>
        <NewTab aria-label="New tab" />
        <CommandBar>
          <Grip $h={24} />
          <Command $ml={7} aria-label="Home"><Home /><Tri /></Command>
          <Command $ml={10} aria-label="Feeds"><Feed /></Command>
          <Command $ml={10} aria-label="Feed list"><Tri c="#908c88" /></Command>
          <Command $ml={9} aria-label="Read mail"><Mail /></Command>
          <Command $ml={10} aria-label="Print"><Printer /><Tri /></Command>
          <Command $ml={14}>Page <Tri /></Command>
          <Command $ml={12}>Safety <Tri /></Command>
          <Command $ml={12}>Tools <Tri /></Command>
          <Command $ml={9} aria-label="Help"><HelpDot /><Tri /></Command>
          <Chevron aria-label="More">»</Chevron>
        </CommandBar>
      </TabBand>

      <Viewport>
        <SideRail>
          <SideMenu aria-label="Menu">{"MENU".split("").map((l) => <span key={l}>{l}</span>)}</SideMenu>
        </SideRail>
        <Workspace>
          <PageTabs>
            <PageTab>Home Page</PageTab>
            <PageTab $on>AdressBook Report <CloseMark>x</CloseMark></PageTab>
          </PageTabs>
          <TabPanel>
            <Frame>
              <FrameBody>
                <AppHeader>
                  <AppTitle>Address Book</AppTitle>
                  <HeaderTools>
                    <MetalButton aria-label="Find"><Magnify /></MetalButton>
                    <MetalButton aria-label="Reload"><Reload /></MetalButton>
                    <MetalButton aria-label="Cancel"><CloseDot /></MetalButton>
                    <Spacer />
                    <EndTools>
                      <MetalButton aria-label="Help"><HelpDot s={22} /></MetalButton>
                      <MetalButton aria-label="Log off"><Power /></MetalButton>
                    </EndTools>
                  </HeaderTools>
                </AppHeader>

                <Section>
                  <SectionHeading />
                  <Filters>
                    <FilterLabel htmlFor="company">Company</FilterLabel>
                    <Picker>
                      <PickerSelect id="company"><option>ION</option></PickerSelect>
                      <ArrowBox as="span" $w={15} $h={14}><Tri /></ArrowBox>
                    </Picker>
                    <FilterLabel htmlFor="employee">Employee</FilterLabel>
                    <WidePicker>
                      <PickerSelect id="employee"><option>AJOSHI</option></PickerSelect>
                      <ArrowBox as="span" $w={15} $h={14}><Tri /></ArrowBox>
                    </WidePicker>
                  </Filters>
                </Section>

                <Section $grow>
                  <SectionHeading />
                  <ReportBar>
                    <Tool $w={30} aria-label="Export"><Export /></Tool>
                    <Tool $w={31} aria-label="Print report"><PrintColor /></Tool>
                    <Tool $w={33} aria-label="Refresh report"><Sync /></Tool>
                    <Tool $w={26} aria-label="First page"><Step back end /></Tool>
                    <Tool $w={30} aria-label="Previous page"><Step back /></Tool>
                    <Tool $w={29} aria-label="Next page"><Step /></Tool>
                    <Tool $w={37} aria-label="Last page"><Step end /></Tool>
                    <PageNo>1 / 1</PageNo>
                    <PageInput aria-label="Page number" />
                    <Tool $w={16} aria-label="Go to page"><GoPage /></Tool>
                  </ReportBar>
                  <ReportView>
                    <Paper>
                      <ReportHead>
                        <ReportTitle>{"Employee Information  Report"}</ReportTitle>
                        <Stamp>
                          <p>Date: <Small>2009-Sep-30</Small></p>
                          <p>Time: <Small>11:34.27</Small></p>
                          <p><Small>Page 1 of 1</Small></p>
                        </Stamp>
                      </ReportHead>
                      <PersonBar><span>Employee :</span><span>AJOSHI</span></PersonBar>
                      <Card>
                        <Details>
                          {labels.map(([t, c, r]) => <Label key={t} $col={c} $row={r}>{t}</Label>)}
                          {values.map((v) => <Value key={v.t} $col={v.c} $row={v.r} $size={v.size} $lines={v.lines}>{v.t}</Value>)}
                        </Details>
                        <Photo />
                      </Card>
                    </Paper>
                    <ScrollBar share="196px" open />
                  </ReportView>
                </Section>
              </FrameBody>
              <ScrollBar share="396px" />
            </Frame>
          </TabPanel>
        </Workspace>
        <ScrollBar share="547px" />
      </Viewport>

      <StatusBar>
        <Pane $pad={4}>:: WSS ::</Pane>
        <Pane $w={22} /><Pane $w={22} /><Pane $w={22} /><Pane $w={22} /><Pane $w={22} /><Pane $w={22} />
        <Pane $w={151} $pad={1}><Monitors globe />Local intranet</Pane>
        <Pane $w={35} $pad={3}><Lock /><Tri /></Pane>
        <ZoomPane $w={78} $pad={5}><ZoomPlus />100%<Spacer /><Tri /></ZoomPane>
        <Grab />
      </StatusBar>

      <TaskBar>
        <StartButton><Flag />Start</StartButton>
        <Grip $h={18} $ml={7} />
        <QuickLaunch>
          <PlainButton aria-label="Internet Explorer"><IE /></PlainButton>
          <PlainButton aria-label="Outlook"><OutlookClock /></PlainButton>
          <PlainButton aria-label="Show desktop"><Desktop /></PlainButton>
          <PlainButton aria-label="Media player"><Media /></PlainButton>
        </QuickLaunch>
        <Grip $h={18} />
        <Tasks>
          <Task><Folder />11</Task>
          <Task><Notes />Pending Helps ...</Task>
          <Task><Word />Document1 - M...</Task>
          <Task><Paint />untitled - Paint</Task>
          <Task $on><IE />WSS - Micros...</Task>
          <Task><Word />Address Book ...</Task>
        </Tasks>
        <Tray>
          <TrayMore aria-label="Show hidden icons">«</TrayMore><OutlookClock /><Wave /><Phone /><Monitors /><Clock>11:34 AM</Clock>
        </Tray>
      </TaskBar>
    </Screen>
  );
}
